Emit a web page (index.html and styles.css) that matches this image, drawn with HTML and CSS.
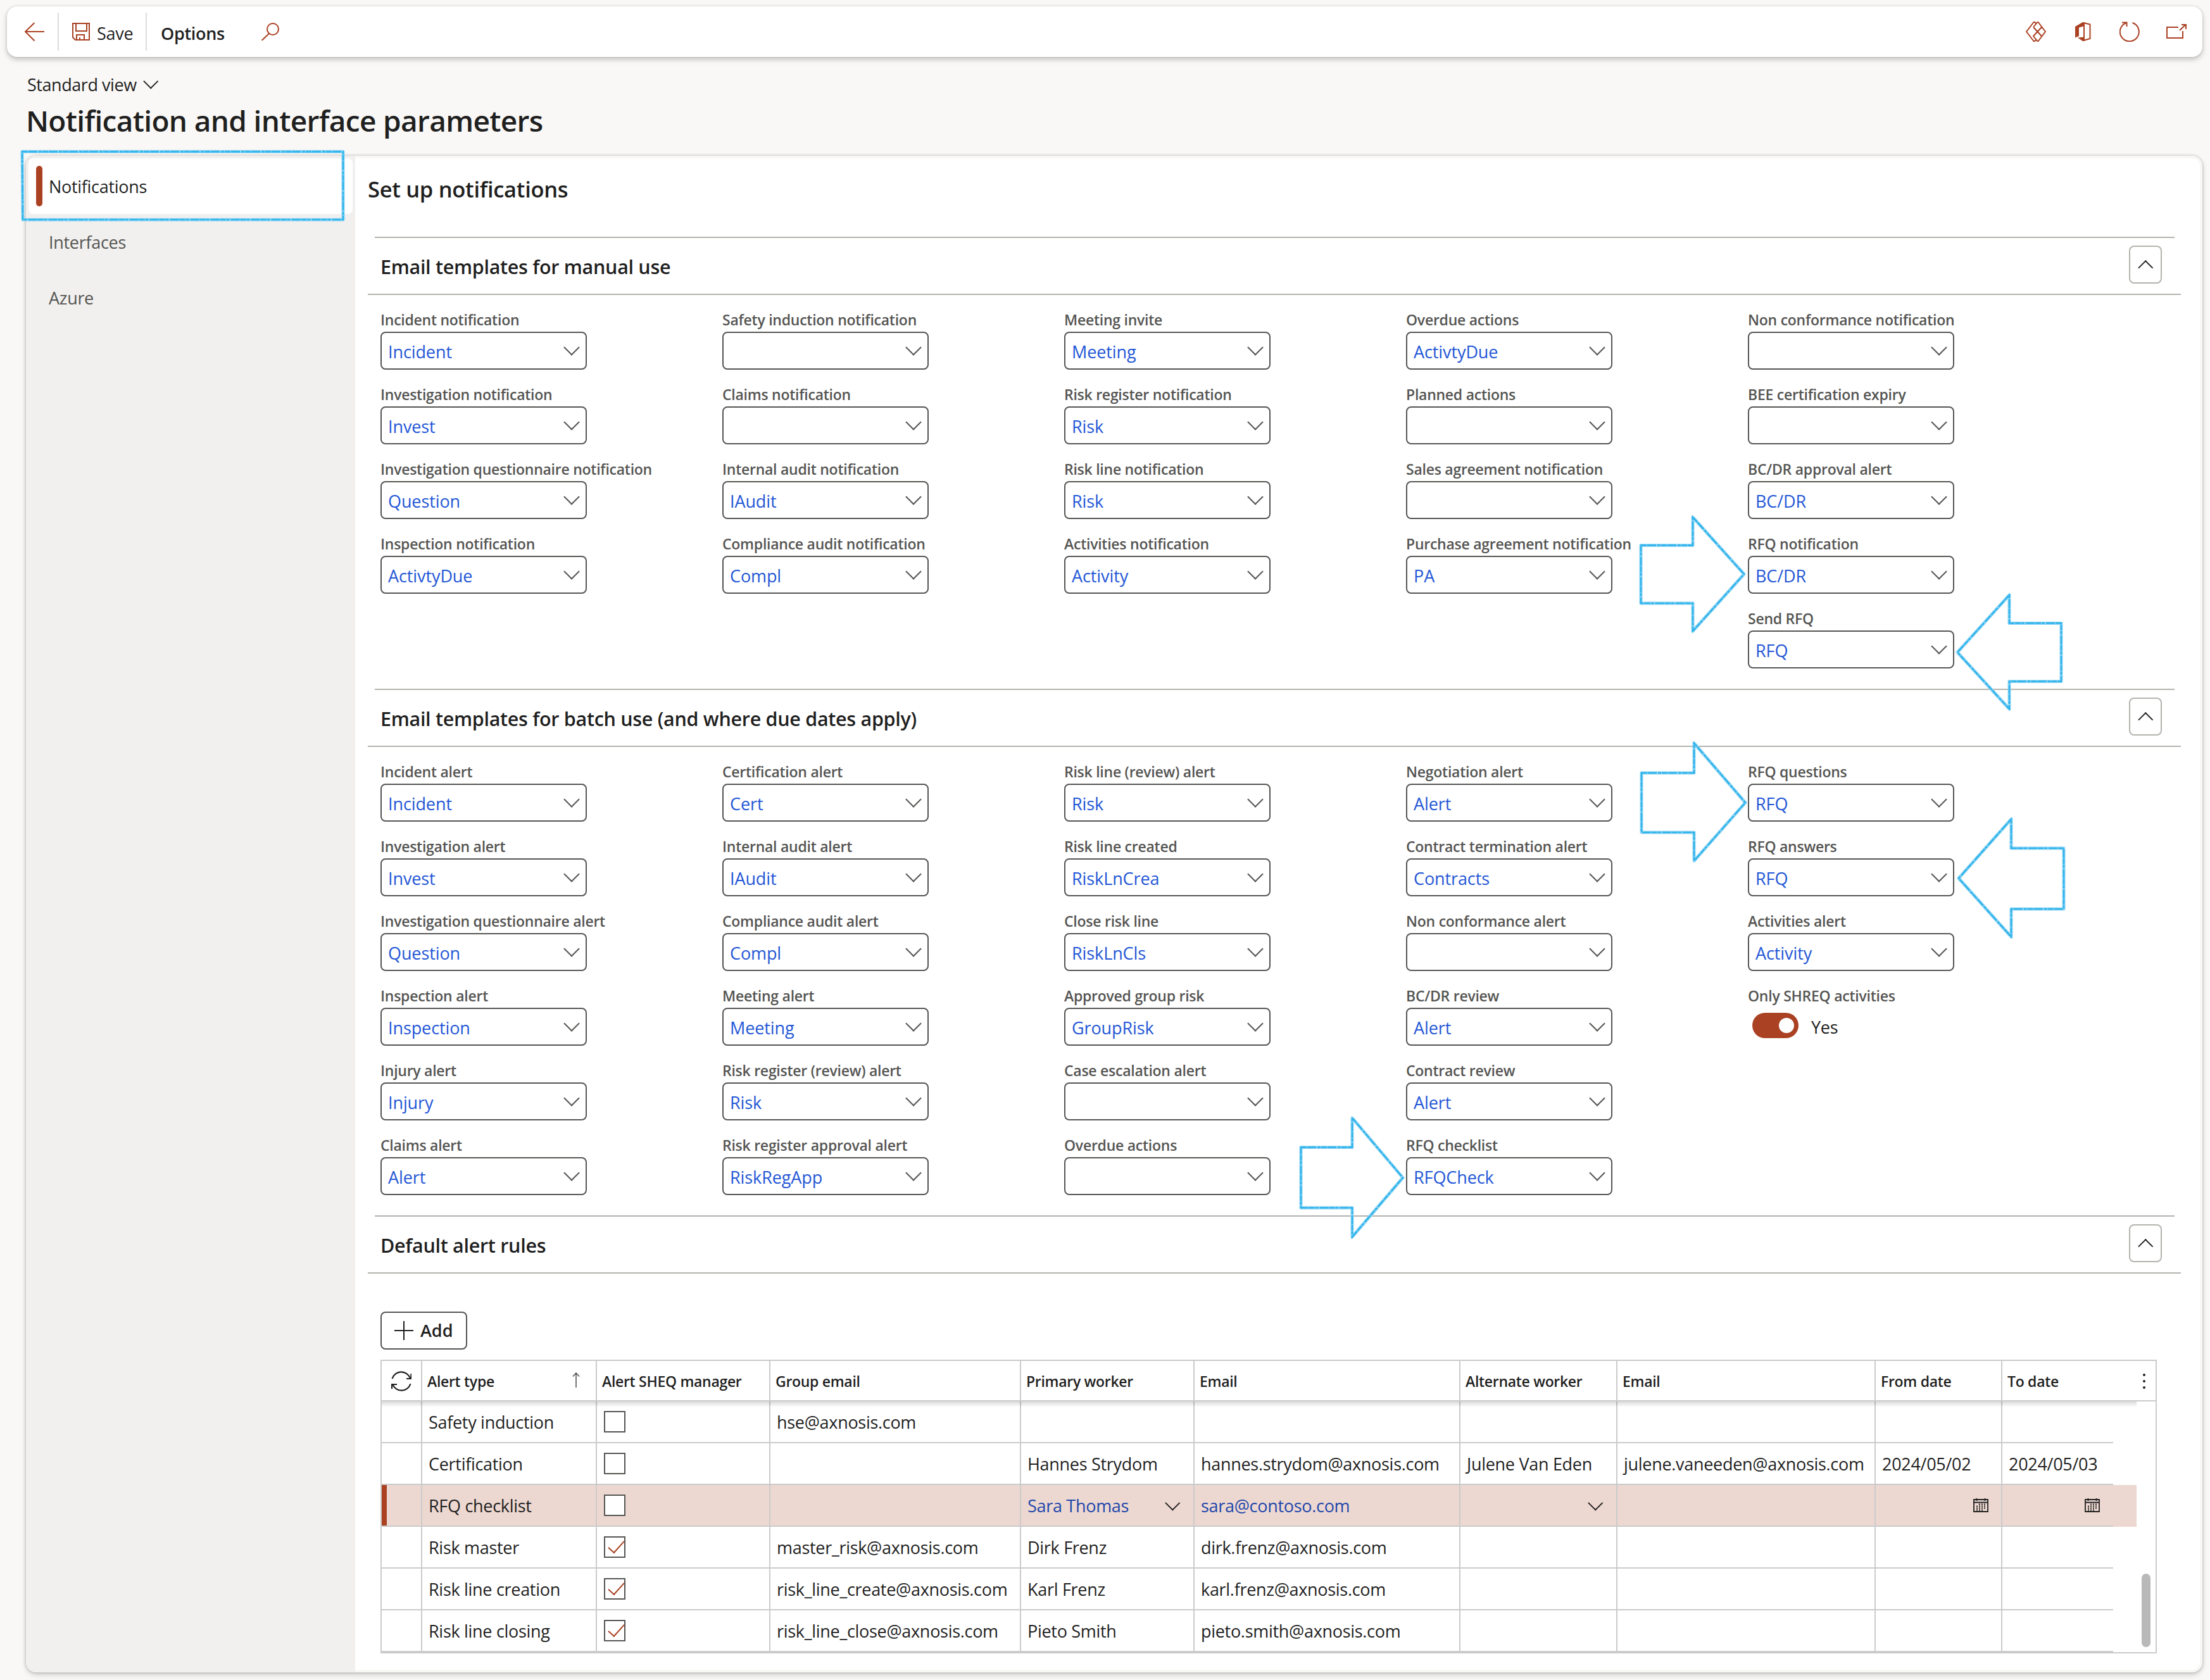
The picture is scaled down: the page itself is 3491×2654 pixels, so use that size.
FILE: index.html
```
<!DOCTYPE html>
<html lang="en">
<head>
    <meta charset="UTF-8">
    <title>Notification and interface parameters</title>
    <link rel="stylesheet" href="styles.css">
</head>
<body>
    <header class="toolbar">
        <svg class="icon icon-back" viewBox="0 0 32 32"><path d="M32 16H2M16.500 2L2 16l14.500 14.500"/></svg>
        <div class="tool tool-save">
            <svg class="icon icon-save" viewBox="0 0 28 28"><path d="M1 1h26v26H5l-4-4zM6 1v12h17V1M7 27v-8h12v8M12 27v-4"/></svg>
            <span>Save</span>
        </div>
        <div class="tool tool-options">Options</div>
        <svg class="icon icon-search" viewBox="0 0 28 28"><circle cx="18" cy="10" r="9"/><path d="M12 17L.5 28"/></svg>

        <div class="toolbar-right">
            <svg class="icon icon-app" viewBox="0 0 32 32"><path d="M16 3.500L14.500 1H12.500L1 16l11.500 15h2L16 28.500M12 9L18 1.500q1-1 2 0L31 16 20 30.500q-1 1-2 0L12 23 25 9M12 9L25 23"/></svg>
            <svg class="icon" viewBox="0 0 32 32"><path class="solid" d="M4 8L16 1l3 .5V7l-9 2.500V23l-6 2.500z"/><path class="solid" d="M8 25.500l10-1V31l-2 0z"/><path d="M18 2v28M17 2l10.500 2.500v22.500L17 30"/></svg>
            <svg class="icon" viewBox="0 0 32 32"><path d="M20.500 2A15 15 0 1 1 10.500 2.200M4 1.500h7.500V8"/></svg>
            <svg class="icon" viewBox="0 0 32 32"><path d="M19 9H1v17h25V15M21 14L30.500 5M24 5h7v7"/></svg>
        </div>
    </header>

    <div class="page-head">
        <div class="view-name">Standard view <i class="chevron"></i></div>
        <h1>Notification and interface parameters</h1>
    </div>

    <div class="panel">
        <nav class="sidebar">
            <div class="tab active">Notifications</div>
            <div class="tab">Interfaces</div>
            <div class="tab">Azure</div>
        </nav>

        <main class="content">
            <h2>Set up notifications</h2>

            <section>
                <div class="section-head">
                    <div class="section-bar">
                        <h3>Email templates for manual use</h3>
                        <button class="collapse"><i class="chevron up"></i></button>
                    </div>
                </div>
                <div class="fields">
                    <div class="col">
                        <div class="field"><label>Incident notification</label><div class="combo">Incident</div></div>
                        <div class="field"><label>Investigation notification</label><div class="combo">Invest</div></div>
                        <div class="field"><label>Investigation questionnaire notification</label><div class="combo">Question</div></div>
                        <div class="field"><label>Inspection notification</label><div class="combo">ActivtyDue</div></div>
                    </div>
                    <div class="col">
                        <div class="field"><label>Safety induction notification</label><div class="combo"></div></div>
                        <div class="field"><label>Claims notification</label><div class="combo"></div></div>
                        <div class="field"><label>Internal audit notification</label><div class="combo">IAudit</div></div>
                        <div class="field"><label>Compliance audit notification</label><div class="combo">Compl</div></div>
                    </div>
                    <div class="col">
                        <div class="field"><label>Meeting invite</label><div class="combo">Meeting</div></div>
                        <div class="field"><label>Risk register notification</label><div class="combo">Risk</div></div>
                        <div class="field"><label>Risk line notification</label><div class="combo">Risk</div></div>
                        <div class="field"><label>Activities notification</label><div class="combo">Activity</div></div>
                    </div>
                    <div class="col">
                        <div class="field"><label>Overdue actions</label><div class="combo">ActivtyDue</div></div>
                        <div class="field"><label>Planned actions</label><div class="combo"></div></div>
                        <div class="field"><label>Sales agreement notification</label><div class="combo"></div></div>
                        <div class="field"><label>Purchase agreement notification</label><div class="combo">PA</div></div>
                    </div>
                    <div class="col">
                        <div class="field"><label>Non conformance notification</label><div class="combo"></div></div>
                        <div class="field"><label>BEE certification expiry</label><div class="combo"></div></div>
                        <div class="field"><label>BC/DR approval alert</label><div class="combo">BC/DR</div></div>
                        <div class="field"><label>RFQ notification</label><div class="combo">BC/DR</div></div>
                        <div class="field"><label>Send RFQ</label><div class="combo">RFQ</div></div>
                    </div>
                </div>
            </section>

            <section>
                <div class="section-head">
                    <div class="section-bar">
                        <h3>Email templates for batch use (and where due dates apply)</h3>
                        <button class="collapse"><i class="chevron up"></i></button>
                    </div>
                </div>
                <div class="fields">
                    <div class="col">
                        <div class="field"><label>Incident alert</label><div class="combo">Incident</div></div>
                        <div class="field"><label>Investigation alert</label><div class="combo">Invest</div></div>
                        <div class="field"><label>Investigation questionnaire alert</label><div class="combo">Question</div></div>
                        <div class="field"><label>Inspection alert</label><div class="combo">Inspection</div></div>
                        <div class="field"><label>Injury alert</label><div class="combo">Injury</div></div>
                        <div class="field"><label>Claims alert</label><div class="combo">Alert</div></div>
                    </div>
                    <div class="col">
                        <div class="field"><label>Certification alert</label><div class="combo">Cert</div></div>
                        <div class="field"><label>Internal audit alert</label><div class="combo">IAudit</div></div>
                        <div class="field"><label>Compliance audit alert</label><div class="combo">Compl</div></div>
                        <div class="field"><label>Meeting alert</label><div class="combo">Meeting</div></div>
                        <div class="field"><label>Risk register (review) alert</label><div class="combo">Risk</div></div>
                        <div class="field"><label>Risk register approval alert</label><div class="combo">RiskRegApp</div></div>
                    </div>
                    <div class="col">
                        <div class="field"><label>Risk line (review) alert</label><div class="combo">Risk</div></div>
                        <div class="field"><label>Risk line created</label><div class="combo">RiskLnCrea</div></div>
                        <div class="field"><label>Close risk line</label><div class="combo">RiskLnCls</div></div>
                        <div class="field"><label>Approved group risk</label><div class="combo">GroupRisk</div></div>
                        <div class="field"><label>Case escalation alert</label><div class="combo"></div></div>
                        <div class="field"><label>Overdue actions</label><div class="combo"></div></div>
                    </div>
                    <div class="col">
                        <div class="field"><label>Negotiation alert</label><div class="combo">Alert</div></div>
                        <div class="field"><label>Contract termination alert</label><div class="combo">Contracts</div></div>
                        <div class="field"><label>Non conformance alert</label><div class="combo"></div></div>
                        <div class="field"><label>BC/DR review</label><div class="combo">Alert</div></div>
                        <div class="field"><label>Contract review</label><div class="combo">Alert</div></div>
                        <div class="field"><label>RFQ checklist</label><div class="combo">RFQCheck</div></div>
                    </div>
                    <div class="col">
                        <div class="field"><label>RFQ questions</label><div class="combo">RFQ</div></div>
                        <div class="field"><label>RFQ answers</label><div class="combo">RFQ</div></div>
                        <div class="field"><label>Activities alert</label><div class="combo">Activity</div></div>
                        <div class="field"><label>Only SHREQ activities</label><div class="switch-row"><span class="switch"></span>Yes</div></div>
                    </div>
                </div>
            </section>

            <section>
                <div class="section-head">
                    <div class="section-bar">
                        <h3>Default alert rules</h3>
                        <button class="collapse"><i class="chevron up"></i></button>
                    </div>
                </div>
                <div class="rules">
                    <button class="add"><svg class="plus" viewBox="0 0 30 30"><path d="M0 15h30M15 0v30"/></svg>Add</button>

                    <div class="table">
                        <div class="row head">
                            <div class="cell"><svg class="sync" viewBox="0 0 32 32"><path d="M1.500 12A15 15 0 0 1 30 11.500M31.500 4v8H24M30.500 20A15 15 0 0 1 2 20.500M1 28v-7h8"/></svg></div>
                            <div class="cell">Alert type<svg class="sort" viewBox="0 0 12 24"><path d="M6 24V1M1 6.500L6 1l5 5.500"/></svg></div>
                            <div class="cell">Alert SHEQ manager</div>
                            <div class="cell">Group email</div>
                            <div class="cell">Primary worker</div>
                            <div class="cell">Email</div>
                            <div class="cell">Alternate worker</div>
                            <div class="cell">Email</div>
                            <div class="cell">From date</div>
                            <div class="cell">To date</div>
                            <div class="cell more"><svg class="dots" viewBox="0 0 4 26"><circle cx="2" cy="3" r="2"/><circle cx="2" cy="13" r="2"/><circle cx="2" cy="23" r="2"/></svg></div>
                        </div>
                        <div class="rows">
                            <div class="row">
                                <div class="cell"></div><div class="cell">Safety induction</div><div class="cell"><span class="check"></span></div>
                                <div class="cell">hse@axnosis.com</div><div class="cell"></div><div class="cell"></div><div class="cell"></div>
                                <div class="cell"></div><div class="cell"></div><div class="cell"></div>
                            </div>
                            <div class="row">
                                <div class="cell"></div><div class="cell">Certification</div><div class="cell"><span class="check"></span></div>
                                <div class="cell"></div><div class="cell">Hannes Strydom</div><div class="cell">hannes.strydom@axnosis.com</div><div class="cell">Julene Van Eden</div>
                                <div class="cell">julene.vaneeden@axnosis.com</div><div class="cell">2024/05/02</div><div class="cell">2024/05/03</div>
                            </div>
                            <div class="row selected">
                                <div class="cell"></div><div class="cell">RFQ checklist</div><div class="cell"><span class="check"></span></div>
                                <div class="cell"></div><div class="cell link">Sara Thomas<i class="chevron"></i></div><div class="cell link">sara@contoso.com</div><div class="cell"><i class="chevron"></i></div>
                                <div class="cell"></div>
                                <div class="cell"><svg class="calendar" viewBox="0 0 24 22"><path d="M1 2h22v19H1zM1 6.500h22M5.500 0v4M18.500 0v4"/><path class="days" d="M9 9.500h12M5 12.500h16M5 15.500h16M5 18.500h12"/></svg></div>
                                <div class="cell"><svg class="calendar last" viewBox="0 0 24 22"><path d="M1 2h22v19H1zM1 6.500h22M5.500 0v4M18.500 0v4"/><path class="days" d="M9 9.500h12M5 12.500h16M5 15.500h16M5 18.500h12"/></svg></div>
                            </div>
                            <div class="row">
                                <div class="cell"></div><div class="cell">Risk master</div><div class="cell"><span class="check on"></span></div>
                                <div class="cell">master_risk@axnosis.com</div><div class="cell">Dirk Frenz</div><div class="cell">dirk.frenz@axnosis.com</div><div class="cell"></div>
                                <div class="cell"></div><div class="cell"></div><div class="cell"></div>
                            </div>
                            <div class="row">
                                <div class="cell"></div><div class="cell">Risk line creation</div><div class="cell"><span class="check on"></span></div>
                                <div class="cell">risk_line_create@axnosis.com</div><div class="cell">Karl Frenz</div><div class="cell">karl.frenz@axnosis.com</div><div class="cell"></div>
                                <div class="cell"></div><div class="cell"></div><div class="cell"></div>
                            </div>
                            <div class="row">
                                <div class="cell"></div><div class="cell">Risk line closing</div><div class="cell"><span class="check on"></span></div>
                                <div class="cell">risk_line_close@axnosis.com</div><div class="cell">Pieto Smith</div><div class="cell">pieto.smith@axnosis.com</div><div class="cell"></div>
                                <div class="cell"></div><div class="cell"></div><div class="cell"></div>
                            </div>
                            <span class="scrollbar"></span>
                        </div>
                    </div>
                </div>
            </section>
        </main>
    </div>

    <!-- hand-drawn marks over the form -->
    <svg class="marks" viewBox="0 0 3491 2654">
        <defs>
            <g id="marks-shapes">
                <path d="M35 239.500H542V347H36Z"/>
                <path d="M2592 861.500H2674V817L2755 907 2674 997V953H2592Z"/>
                <path d="M3256 984.500H3174V940L3092 1030.500 3174 1120V1076.500H3256Z"/>
                <path d="M2593 1221H2676V1174L2757 1268 2676 1360V1315H2593Z"/>
                <path d="M3260 1340H3177V1294L3094 1387.500 3177 1480V1436H3260Z"/>
                <path d="M2055 1812.500H2136V1766L2216 1860.500 2136 1954V1908H2055Z"/>
            </g>
        </defs>
        <use href="#marks-shapes" class="mark-soft"/>
        <use href="#marks-shapes" class="mark-line"/>
    </svg>
</body>
</html>
```
FILE: styles.css
```
:root {
    --brand: #aa4123;
    --text: #1f1f1f;
    --muted: #555553;
    --link: #2457d6;
    --line: #b3b3af;
    --grid: #cbcbcb;
    --mark: #2db2ea;
}

* { box-sizing: border-box; }

body {
    width: 3491px;
    height: 2654px;
    margin: 0;
    overflow: hidden;
    position: relative;
    background: #f9f8f6;
    color: var(--text);
    font-family: "Open Sans", "Noto Sans", sans-serif;
    font-size: 27px;
    letter-spacing: -0.3px;
    white-space: nowrap;
}

h1, h2, h3 { margin: 0; font-weight: 600; }

button {
    font: inherit;
    letter-spacing: inherit;
    color: inherit;
    background: #fff;
    padding: 0;
}

.icon {
    width: 32px;
    height: 32px;
    fill: none;
    stroke: var(--brand);
    stroke-width: 2;
    flex: none;
}

.icon .solid { fill: var(--brand); stroke: none; }
.icon-app { stroke-linejoin: round; }

.chevron {
    display: inline-block;
    flex: none;
    width: 16.5px;
    height: 16.5px;
    border: solid currentColor;
    border-width: 0 2px 2px 0;
    transform: translateY(-4px) rotate(45deg);
}

.chevron.up { transform: translateY(5px) rotate(225deg); }

/* toolbar */
.toolbar {
    display: flex;
    align-items: center;
    height: 80px;
    margin: 10px 12px 0 11px;
    padding: 0 25px 0 27px;
    background: #fff;
    border-radius: 16px;
    box-shadow: 0 0 3px rgba(0, 0, 0, 0.16), 0 4px 9px rgba(0, 0, 0, 0.22);
}

.toolbar .icon-back { margin-right: 21px; }
.toolbar .icon-save, .toolbar .icon-search { width: 28px; height: 28px; }

.tool {
    display: flex;
    align-items: center;
    height: 60px;
    border-left: 2px solid #dcdcdc;
    line-height: 36px;
}

.tool-save { width: 139px; padding-left: 21px; gap: 11px; }
.tool-save span { padding-top: 5px; }

.tool-options {
    width: 183px;
    padding: 5px 0 0 22px;
    font-weight: 600;
    letter-spacing: -0.3px;
}

.toolbar-right {
    display: flex;
    gap: 42px;
    margin-left: auto;
}

/* page title */
.page-head { height: 156px; padding: 26px 0 0 43px; }

.view-name {
    display: flex;
    align-items: center;
    gap: 14px;
    line-height: 36px;
    letter-spacing: -0.45px;
}

.view-name .chevron { transform: translateY(-6px) rotate(45deg); }

h1 {
    margin: 8px 0 0 -2px;
    font-size: 46px;
    line-height: 60px;
    letter-spacing: -0.67px;
}

/* main panel */
.panel {
    display: flex;
    height: 2396px;
    margin: 0 12px 0 41px;
    border-radius: 16px;
    background: #f8f7f6;
    box-shadow: 0 0 4px rgba(0, 0, 0, 0.22), 0 4px 8px rgba(0, 0, 0, 0.16);
}

.sidebar {
    flex: none;
    width: 520px;
    padding: 4px;
    background: #f1f0ee;
    border-radius: 16px 0 0 16px;
}

.tab {
    display: flex;
    align-items: center;
    height: 88px;
    padding-left: 32px;
    color: var(--muted);
}

.tab.active {
    padding-left: 12px;
    border-radius: 8px;
    background: #fff;
    color: var(--text);
}

.tab.active::before {
    content: "";
    width: 10px;
    height: 64px;
    margin-right: 10px;
    border-radius: 5px;
    background: var(--brand);
}

.content {
    flex: 1;
    margin: 4px 4px 4px 0;
    padding: 24px 30px 0 20px;
    background: #fff;
    border-radius: 0 12px 12px 0;
}

h2 {
    margin-bottom: 50px;
    font-size: 34.5px;
    line-height: 50px;
    letter-spacing: -0.3px;
}

/* collapsible sections */
.section-head {
    padding: 0 10px 0 11px;
    border-bottom: 2px solid var(--line);
}

.section-bar {
    display: flex;
    align-items: center;
    justify-content: space-between;
    height: 90px;
    padding: 0 20px 4px 9px;
    border-top: 2px solid var(--line);
}

h3 {
    padding-top: 6px;
    font-size: 30.5px;
    line-height: 40px;
    letter-spacing: -0.3px;
}

.collapse {
    display: flex;
    align-items: center;
    justify-content: center;
    width: 52px;
    height: 60px;
    border: 2px solid var(--line);
    border-radius: 8px;
}

.fields {
    display: grid;
    grid-template-columns: repeat(5, 540px);
    padding: 23px 0 32px 20px;
}

.col { display: flex; flex-direction: column; gap: 23px; }

.field label {
    display: block;
    height: 35px;
    font-size: 23px;
    font-weight: 600;
    line-height: 32px;
    letter-spacing: -0.25px;
    color: var(--muted);
}

.combo {
    display: flex;
    align-items: center;
    justify-content: space-between;
    width: 326px;
    height: 60px;
    padding: 2px 13px 0 10px;
    border: 2px solid var(--muted);
    border-radius: 8px;
    color: var(--link);
    letter-spacing: -0.1px;
}

.combo::after {
    content: "";
    width: 16px;
    height: 16px;
    margin-left: auto;
    border: solid var(--muted);
    border-width: 0 2px 2px 0;
    transform: translateY(-6px) rotate(45deg);
}

.switch-row {
    display: flex;
    gap: 20px;
    padding: 8px 0 0 7px;
    height: 60px;
    line-height: 45px;
}

.switch {
    width: 73px;
    height: 40px;
    padding: 8px 7px 8px 42px;
    border-radius: 20px;
    background: var(--brand);
}

.switch::before {
    content: "";
    display: block;
    width: 24px;
    height: 24px;
    border-radius: 50%;
    background: #fff;
}

/* alert rules table */
.rules { padding: 60px 38px 0 20px; }

.add {
    display: flex;
    align-items: center;
    width: 137px;
    height: 60px;
    padding: 0 0 1px 20px;
    border: 2px solid var(--muted);
    border-radius: 8px;
    font-weight: 600;
    letter-spacing: 0;
    line-height: 40px;
}

.plus {
    width: 30px;
    height: 30px;
    margin-right: 11px;
    fill: none;
    stroke: var(--text);
    stroke-width: 2;
}

.table {
    height: 464px;
    margin-top: 16px;
    border: 2px solid var(--grid);
}

.row {
    display: grid;
    grid-template-columns: 64px 276px 274px 396px 274px 420px 248px 408px 200px 175px;
    width: 2772px;
    height: 66px;
}

.row.head {
    grid-template-columns: 64px 276px 274px 396px 274px 420px 248px 408px 200px 175px 67px;
    width: auto;
    height: 64px;
    font-size: 23px;
    font-weight: 600;
    letter-spacing: -0.3px;
}

.cell {
    display: flex;
    align-items: center;
    justify-content: space-between;
    padding: 0 16px 0 10px;
    border: solid var(--grid);
    border-width: 0 2px 2px 0;
}

.head .cell { padding-top: 2px; padding-left: 8px; }
.cell:nth-child(10), .cell.more { border-right: 0; }
.cell .chevron { margin-left: auto; margin-right: 9px; color: var(--text); }

.sync {
    width: 32px;
    height: 32px;
    margin-left: 7px;
    flex: none;
    fill: none;
    stroke: var(--text);
    stroke-width: 2.2;
}

.sort {
    width: 12px;
    height: 24px;
    margin: -5px 9px 0 0;
    fill: none;
    stroke: var(--muted);
    stroke-width: 1.6;
}

.more { justify-content: flex-end; padding-right: 16px; }
.dots { width: 4px; height: 26px; fill: var(--text); }

.rows { position: relative; }

/* shade under the sticky header */
.rows::before {
    content: "";
    position: absolute;
    top: 0;
    left: 0;
    width: 2772px;
    height: 9px;
    background: linear-gradient(rgba(0, 0, 0, 0.14), rgba(0, 0, 0, 0));
}

.row.selected { background: #edd8d1; }
.row.selected .cell:first-child { box-shadow: inset 8px 0 0 var(--brand); }
.row .link { color: #1f47ab; }

.check {
    width: 34px;
    height: 34px;
    margin-left: 1px;
    border: 2px solid var(--muted);
    background: #fff;
}

.check.on::before {
    content: "";
    display: block;
    width: 23px;
    height: 11px;
    margin: 5px 0 0 5px;
    border: solid var(--brand);
    border-width: 0 0 2px 2px;
    transform: rotate(-48deg);
}

.calendar {
    width: 24px;
    height: 22px;
    margin: -1px 4px 0 auto;
    fill: none;
    stroke: var(--text);
    stroke-width: 1.8;
}

.calendar.last { margin-right: 5px; }
.calendar .days { stroke-dasharray: 2 2; }

.scrollbar {
    position: absolute;
    right: 8px;
    top: 272px;
    width: 14px;
    height: 116px;
    border-radius: 7px;
    background: #b9b9b9;
}

.marks {
    position: absolute;
    top: 0;
    left: 0;
    width: 3491px;
    height: 2654px;
    fill: none;
    pointer-events: none;
}

.mark-soft { stroke: #8fd6f5; stroke-width: 5; stroke-linejoin: round; }
.mark-line { stroke: var(--mark); stroke-width: 2.5; stroke-dasharray: 9 1 14 2 5 1; }
```
